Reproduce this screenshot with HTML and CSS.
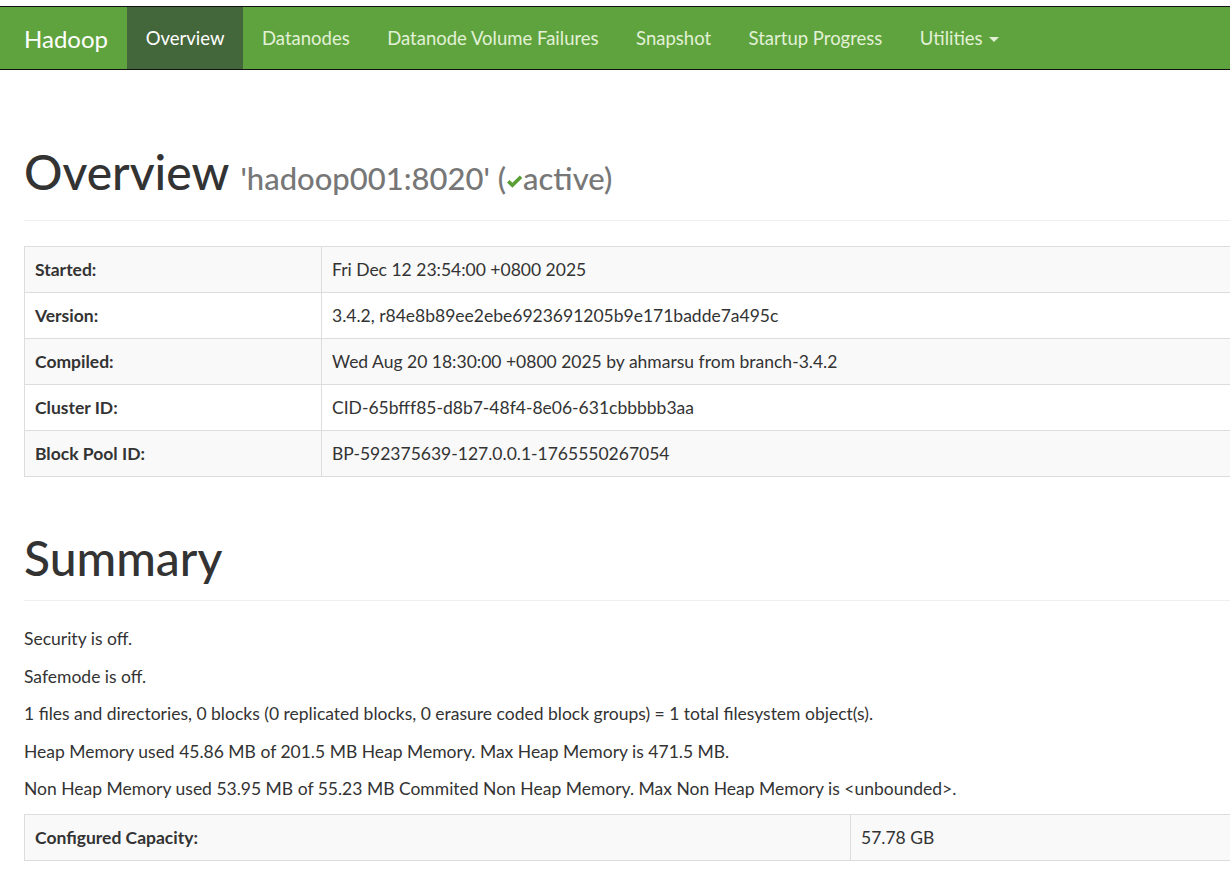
FILE: index.html
```html
<!DOCTYPE html>
<html>
<head>
    <title>Namenode information</title>
    <link rel="stylesheet" href="styles.css">
</head>
<body>
    <div class="top-gap"></div>
    <header class="navbar">
        <a class="brand" href="#">Hadoop</a>
        <ul class="nav">
            <li class="active"><a href="#">Overview</a></li>
            <li><a href="#">Datanodes</a></li>
            <li><a href="#">Datanode Volume Failures</a></li>
            <li><a href="#">Snapshot</a></li>
            <li><a href="#">Startup Progress</a></li>
            <li><a href="#">Utilities <span class="caret"></span></a></li>
        </ul>
    </header>

    <div class="container">
        <div class="page-header first">
            <h1>Overview <small>'hadoop001:8020' (<svg class="ok" width="17" height="15" viewBox="0 0 17 15"><path d="M1 8.5 L3.6 6 L6.4 8.8 L13.8 1.5 L16.3 4 L6.4 13.8 Z" fill="#5a9e36"/></svg>active)</small></h1>
        </div>

        <table class="table info">
            <tr><th>Started:</th><td>Fri Dec 12 23:54:00 +0800 2025</td></tr>
            <tr><th>Version:</th><td>3.4.2, r84e8b89ee2ebe6923691205b9e171badde7a495c</td></tr>
            <tr><th>Compiled:</th><td>Wed Aug 20 18:30:00 +0800 2025 by ahmarsu from branch-3.4.2</td></tr>
            <tr><th>Cluster ID:</th><td>CID-65bfff85-d8b7-48f4-8e06-631cbbbbb3aa</td></tr>
            <tr><th>Block Pool ID:</th><td>BP-592375639-127.0.0.1-1765550267054</td></tr>
        </table>

        <div class="page-header">
            <h1>Summary</h1>
        </div>

        <p>Security is off.</p>
        <p>Safemode is off.</p>
        <p>1 files and directories, 0 blocks (0 replicated blocks, 0 erasure coded block groups) = 1 total filesystem object(s).</p>
        <p>Heap Memory used 45.86 MB of 201.5 MB Heap Memory. Max Heap Memory is 471.5 MB.</p>
        <p>Non Heap Memory used 53.95 MB of 55.23 MB Commited Non Heap Memory. Max Non Heap Memory is &lt;unbounded&gt;.</p>

        <table class="table summary">
            <tr><th>Configured Capacity:</th><td>57.78 GB</td></tr>
        </table>
    </div>
</body>
</html>
```

FILE: styles.css
```css
html, body {
    overflow: hidden;
}
body {
    margin: 0;
    font-family: Lato, "Open Sans", sans-serif;
    font-size: 17.5px;
    line-height: 25px;
    color: #333;
    background: #fff;
}
a {
    text-decoration: none;
}
.top-gap {
    height: 6px;
}
.navbar {
    display: flex;
    align-items: stretch;
    height: 62px;
    padding-left: 5px;
    background: #5fa33e;
    border-top: 1px solid #111;
    border-bottom: 1px solid #111;
}
.brand {
    display: flex;
    align-items: center;
    padding: 0 19px;
    font-size: 24px;
    color: #fff;
}
.nav {
    display: flex;
    margin: 0;
    padding: 0;
    list-style: none;
}
.nav li a {
    display: flex;
    align-items: center;
    height: 100%;
    padding: 0 18.75px;
    font-size: 18.5px;
    color: #e2f1d6;
}
.nav li.active a {
    background: #43663a;
    color: #fff;
}
.caret {
    display: inline-block;
    margin-left: 6px;
    margin-top: 2px;
    border-top: 5px solid;
    border-left: 5px solid transparent;
    border-right: 5px solid transparent;
}
.container {
    padding-left: 24px;
    width: 1240px;
}
.page-header {
    margin: 50px 0 25px;
    padding-bottom: 11px;
    border-bottom: 1px solid #eee;
}
.page-header.first {
    margin-top: 71px;
}
h1 {
    margin: 0;
    font-size: 48px;
    font-weight: 500;
    line-height: 62px;
}
h1 small {
    font-size: 31px;
    color: #777;
}
.ok {
    vertical-align: 1px;
}
.table {
    width: 100%;
    border-collapse: collapse;
    border: 1px solid #ddd;
    margin-bottom: 25px;
}
.table th,
.table td {
    padding: 10px;
    border: 1px solid #ddd;
    text-align: left;
    vertical-align: top;
}
.table th {
    font-weight: bold;
}
.table tr:nth-child(odd) {
    background: #f9f9f9;
}
.info th {
    width: 276px;
}
.summary th {
    width: 805px;
}
p {
    margin: 0 0 12.5px;
}
```
